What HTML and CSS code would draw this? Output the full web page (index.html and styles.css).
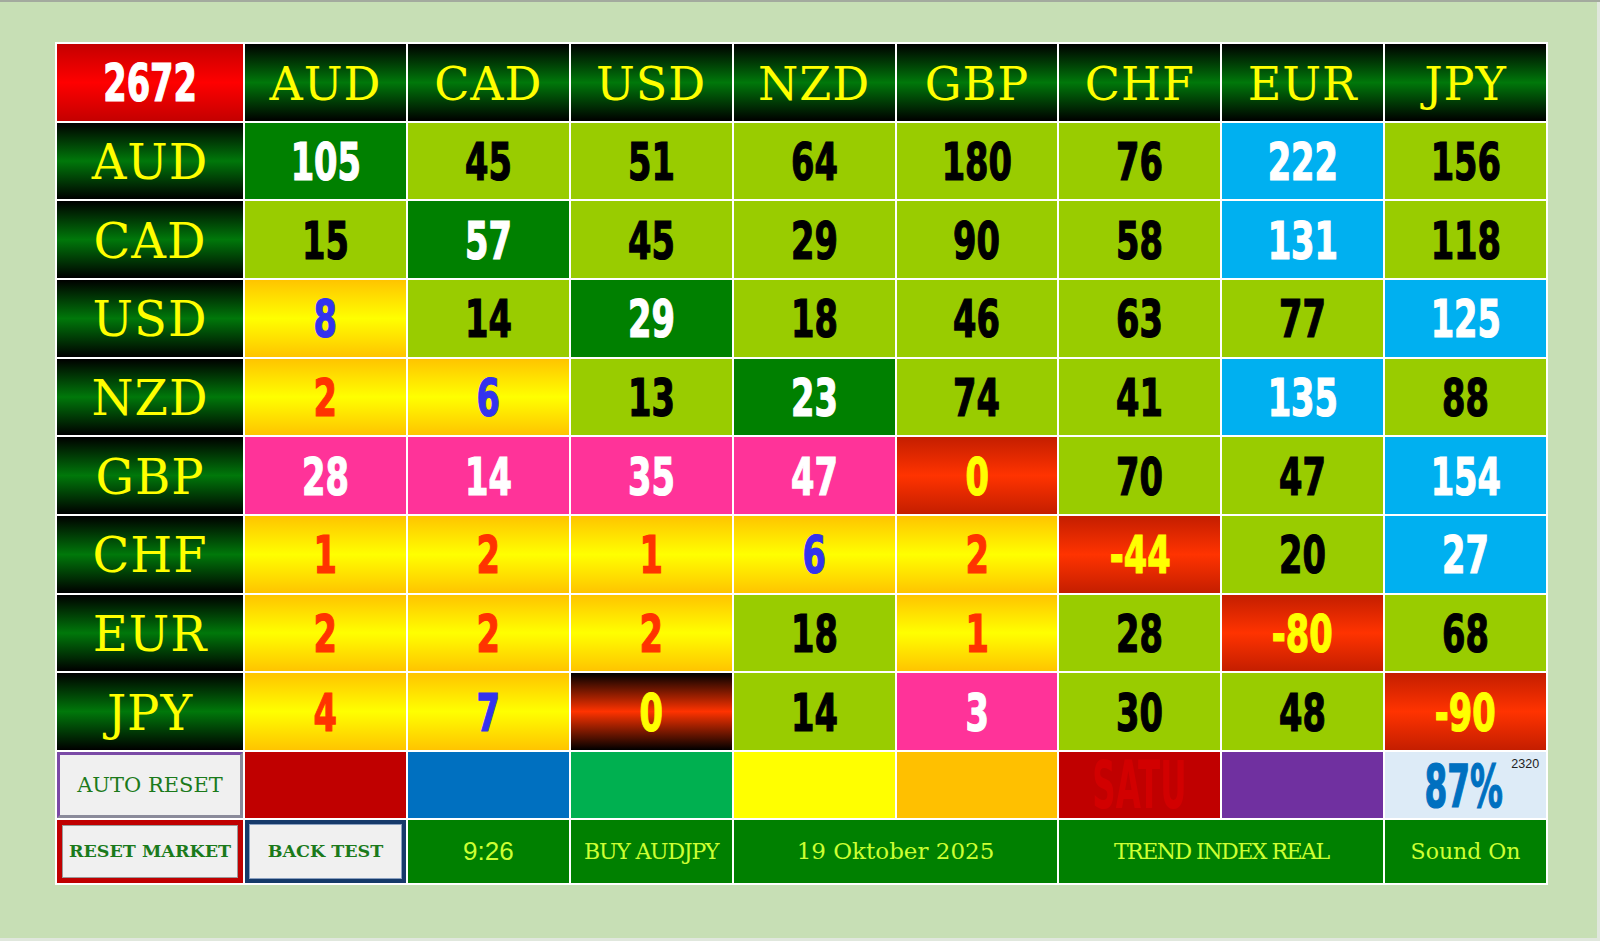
FILE: index.html
```html
<!DOCTYPE html>
<html>
<head>
<meta charset="utf-8">
<title>Currency Strength Matrix</title>
<link rel="stylesheet" href="styles.css">
</head>
<body>
<div class="page">
  <div class="board">
    <div class="c corner num"><span>2672</span></div>
    <div class="c hd">AUD</div>
    <div class="c hd">CAD</div>
    <div class="c hd">USD</div>
    <div class="c hd">NZD</div>
    <div class="c hd">GBP</div>
    <div class="c hd">CHF</div>
    <div class="c hd">EUR</div>
    <div class="c hd">JPY</div>

    <div class="c hd side">AUD</div>
    <div class="c num dg"><span>105</span></div>
    <div class="c num lg"><span>45</span></div>
    <div class="c num lg"><span>51</span></div>
    <div class="c num lg"><span>64</span></div>
    <div class="c num lg"><span>180</span></div>
    <div class="c num lg"><span>76</span></div>
    <div class="c num bl"><span>222</span></div>
    <div class="c num lg"><span>156</span></div>

    <div class="c hd side">CAD</div>
    <div class="c num lg"><span>15</span></div>
    <div class="c num dg"><span>57</span></div>
    <div class="c num lg"><span>45</span></div>
    <div class="c num lg"><span>29</span></div>
    <div class="c num lg"><span>90</span></div>
    <div class="c num lg"><span>58</span></div>
    <div class="c num bl"><span>131</span></div>
    <div class="c num lg"><span>118</span></div>

    <div class="c hd side">USD</div>
    <div class="c num yl tb"><span>8</span></div>
    <div class="c num lg"><span>14</span></div>
    <div class="c num dg"><span>29</span></div>
    <div class="c num lg"><span>18</span></div>
    <div class="c num lg"><span>46</span></div>
    <div class="c num lg"><span>63</span></div>
    <div class="c num lg"><span>77</span></div>
    <div class="c num bl"><span>125</span></div>

    <div class="c hd side">NZD</div>
    <div class="c num yl tr"><span>2</span></div>
    <div class="c num yl tb"><span>6</span></div>
    <div class="c num lg"><span>13</span></div>
    <div class="c num dg"><span>23</span></div>
    <div class="c num lg"><span>74</span></div>
    <div class="c num lg"><span>41</span></div>
    <div class="c num bl"><span>135</span></div>
    <div class="c num lg"><span>88</span></div>

    <div class="c hd side">GBP</div>
    <div class="c num pk"><span>28</span></div>
    <div class="c num pk"><span>14</span></div>
    <div class="c num pk"><span>35</span></div>
    <div class="c num pk"><span>47</span></div>
    <div class="c num rd"><span>0</span></div>
    <div class="c num lg"><span>70</span></div>
    <div class="c num lg"><span>47</span></div>
    <div class="c num bl"><span>154</span></div>

    <div class="c hd side">CHF</div>
    <div class="c num yl tr"><span>1</span></div>
    <div class="c num yl tr"><span>2</span></div>
    <div class="c num yl tr"><span>1</span></div>
    <div class="c num yl tb"><span>6</span></div>
    <div class="c num yl tr"><span>2</span></div>
    <div class="c num rd"><span>-44</span></div>
    <div class="c num lg"><span>20</span></div>
    <div class="c num bl"><span>27</span></div>

    <div class="c hd side">EUR</div>
    <div class="c num yl tr"><span>2</span></div>
    <div class="c num yl tr"><span>2</span></div>
    <div class="c num yl tr"><span>2</span></div>
    <div class="c num lg"><span>18</span></div>
    <div class="c num yl tr"><span>1</span></div>
    <div class="c num lg"><span>28</span></div>
    <div class="c num rd"><span>-80</span></div>
    <div class="c num lg"><span>68</span></div>

    <div class="c hd side">JPY</div>
    <div class="c num yl tr"><span>4</span></div>
    <div class="c num yl tb"><span>7</span></div>
    <div class="c num bk"><span>0</span></div>
    <div class="c num lg"><span>14</span></div>
    <div class="c num pk"><span>3</span></div>
    <div class="c num lg"><span>30</span></div>
    <div class="c num lg"><span>48</span></div>
    <div class="c num rd"><span>-90</span></div>

    <div class="c btn auto">AUTO RESET</div>
    <div class="c sw s-red"></div>
    <div class="c sw s-blue"></div>
    <div class="c sw s-green"></div>
    <div class="c sw s-yellow"></div>
    <div class="c sw s-orange"></div>
    <div class="c sw s-red"><span class="satu">SATU</span></div>
    <div class="c sw s-purple"></div>
    <div class="c pct"><span class="pv">87%</span><span class="sup">2320</span></div>

    <div class="c btn reset">RESET MARKET</div>
    <div class="c btn back">BACK TEST</div>
    <div class="c bar time">9:26</div>
    <div class="c bar serif buy">BUY AUDJPY</div>
    <div class="c bar serif date span2">19 Oktober 2025</div>
    <div class="c bar serif trend span2">TREND INDEX REAL</div>
    <div class="c bar serif">Sound On</div>
  </div>
</div>
</body>
</html>
```

FILE: styles.css
```css
html {
  background: #e0e7dd;
}
body {
  margin: 0;
  border-top: 2px solid #a3aa9e;
}
.page {
  width: 1597px;
  height: 936px;
  background: #c7dfb5;
  padding: 40px 0 0 55px;
  box-sizing: border-box;
}
.board {
  width: 1493px;
  box-sizing: border-box;
  background: #ffffff;
  padding: 2px;
  display: grid;
  grid-template-columns: 186px repeat(8, 1fr);
  grid-template-rows: repeat(9, 76.67px) 66px 63px;
  gap: 2px;
}
.c {
  display: flex;
  align-items: center;
  justify-content: center;
  overflow: hidden;
  box-sizing: border-box;
  white-space: nowrap;
}
.hd {
  background: linear-gradient(to bottom, #000000 0%, #00780a 50%, #000000 100%);
  color: #ffff00;
  font-family: "DejaVu Serif", serif;
  font-size: 46px;
  letter-spacing: 1px;
  padding-top: 4px;
}
.hd.side {
  font-size: 48px;
  padding-top: 2px;
}
.num {
  font-family: "DejaVu Sans Condensed", "DejaVu Sans", sans-serif;
  font-weight: bold;
  font-size: 52px;
  color: #000000;
}
.num span {
  display: inline-block;
  transform: scaleX(0.72);
  -webkit-text-stroke: 1.2px currentColor;
  line-height: 1;
  margin-top: 2px;
}
.corner {
  background: linear-gradient(to bottom, #c40000 0%, #ff0000 50%, #c40000 100%);
  color: #ffffff;
}
.dg { background: #008000; color: #ffffff; }
.lg { background: #99cc00; color: #000000; }
.bl { background: #00b0f0; color: #ffffff; }
.pk { background: #ff3399; color: #ffffff; }
.yl { background: linear-gradient(to bottom, #ffc400 0%, #ffff00 50%, #ffc400 100%); }
.tr { color: #ff3300; }
.tb { color: #3333ee; }
.rd {
  background: linear-gradient(to bottom, #c41e00 0%, #ff3300 50%, #c41e00 100%);
  color: #ffff00;
}
.bk {
  background: linear-gradient(to bottom, #000000 0%, #ff3300 50%, #000000 100%);
  color: #ffff00;
}

.c.sw,
.c.pct {
  overflow: visible;
}
.s-red { background: #c00000; }
.s-blue { background: #0070c0; }
.s-green { background: #00b050; }
.s-yellow { background: #ffff00; }
.s-orange { background: #ffc000; }
.s-purple { background: #7030a0; }
.satu {
  display: inline-block;
  font-family: "DejaVu Sans Condensed", "DejaVu Sans", sans-serif;
  font-weight: bold;
  font-size: 44px;
  line-height: 0.8;
  color: #d20000;
  transform: scale(0.82, 1.5);
}
.pct {
  background: #ddebf7;
}
.pv {
  display: inline-block;
  font-family: "DejaVu Sans Condensed", "DejaVu Sans", sans-serif;
  font-weight: bold;
  font-size: 48px;
  line-height: 0.9;
  color: #0070c0;
  -webkit-text-stroke: 1px currentColor;
  transform: scale(0.76, 1.22);
  margin-top: 4px;
  margin-left: 20px;
}
.sup {
  align-self: flex-start;
  margin-top: 5px;
  margin-left: -4px;
  font-family: "Liberation Sans", sans-serif;
  font-size: 12.5px;
  color: #222222;
}

.btn {
  background: #f0f0f0;
  color: #1b7a1b;
  font-family: "DejaVu Serif", serif;
}
.auto {
  border-style: solid;
  border-width: 3px;
  border-color: #7a4aa6 #8a8a9a #8a8a9a #7a4aa6;
  font-size: 21px;
}
.reset {
  border: 5px solid #c00000;
  box-shadow: inset 0 0 0 1px #9a9a9a;
  font-weight: bold;
  font-size: 17.5px;
}
.back {
  border: 4px solid #163a6a;
  box-shadow: inset 0 0 0 1px #8aa0c0;
  font-weight: bold;
  font-size: 17.5px;
}
.bar {
  background: #008000;
  color: #ccff33;
}
.time {
  font-family: "Liberation Sans", sans-serif;
  font-size: 26px;
}
.serif {
  font-family: "DejaVu Serif", serif;
  font-size: 22px;
}
.buy {
  letter-spacing: -1.2px;
}
.date {
  font-size: 23px;
}
.trend {
  letter-spacing: -1.5px;
}
.span2 {
  grid-column: span 2;
}
```
